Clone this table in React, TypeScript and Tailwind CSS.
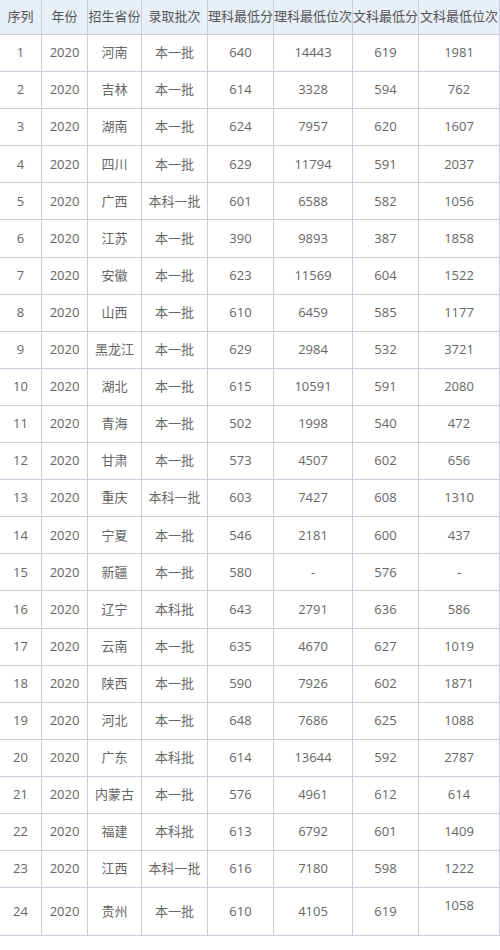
const headers = ['序列', '年份', '招生省份', '录取批次', '理科最低分', '理科最低位次', '文科最低分', '文科最低位次'];

const rows: string[][] = [
  ['1', '2020', '河南', '本一批', '640', '14443', '619', '1981'],
  ['2', '2020', '吉林', '本一批', '614', '3328', '594', '762'],
  ['3', '2020', '湖南', '本一批', '624', '7957', '620', '1607'],
  ['4', '2020', '四川', '本一批', '629', '11794', '591', '2037'],
  ['5', '2020', '广西', '本科一批', '601', '6588', '582', '1056'],
  ['6', '2020', '江苏', '本一批', '390', '9893', '387', '1858'],
  ['7', '2020', '安徽', '本一批', '623', '11569', '604', '1522'],
  ['8', '2020', '山西', '本一批', '610', '6459', '585', '1177'],
  ['9', '2020', '黑龙江', '本一批', '629', '2984', '532', '3721'],
  ['10', '2020', '湖北', '本一批', '615', '10591', '591', '2080'],
  ['11', '2020', '青海', '本一批', '502', '1998', '540', '472'],
  ['12', '2020', '甘肃', '本一批', '573', '4507', '602', '656'],
  ['13', '2020', '重庆', '本科一批', '603', '7427', '608', '1310'],
  ['14', '2020', '宁夏', '本一批', '546', '2181', '600', '437'],
  ['15', '2020', '新疆', '本一批', '580', '-', '576', '-'],
  ['16', '2020', '辽宁', '本科批', '643', '2791', '636', '586'],
  ['17', '2020', '云南', '本一批', '635', '4670', '627', '1019'],
  ['18', '2020', '陕西', '本一批', '590', '7926', '602', '1871'],
  ['19', '2020', '河北', '本一批', '648', '7686', '625', '1088'],
  ['20', '2020', '广东', '本科批', '614', '13644', '592', '2787'],
  ['21', '2020', '内蒙古', '本一批', '576', '4961', '612', '614'],
  ['22', '2020', '福建', '本科批', '613', '6792', '601', '1409'],
  ['23', '2020', '江西', '本科一批', '616', '7180', '598', '1222'],
  ['24', '2020', '贵州', '本一批', '610', '4105', '619', '1058']
];

const colWidths = ['w-[42px]', 'w-[46px]', 'w-[54px]', 'w-[66px]', 'w-[66px]', 'w-[79px]', 'w-[66px]', 'w-[81px]'];

export default function App() {
  return (
    <div
      className="h-[950px] w-[500px] overflow-hidden bg-white text-[13px] text-[#666]"
      style={{ fontFamily: '"Open Sans", "Noto Sans CJK SC", sans-serif' }}>
      <table className="-ml-px -mt-px w-[500px] table-fixed border-collapse">
        <colgroup>
          {colWidths.map((w, idx) => (
            <col key={idx} className={w} />
          ))}
        </colgroup>
        <thead>
          <tr className="h-[35px] bg-[#e7eff8]">
            {headers.map((h) => (
              <th
                key={h}
                className="whitespace-nowrap border border-[#cdcade] p-0 text-center font-normal text-[#555]">
                {h}
              </th>
            ))}
          </tr>
        </thead>
        <tbody>
          {rows.map((row, rIdx) => {
            const last = rIdx === rows.length - 1;
            return (
              <tr key={rIdx} className={last ? 'h-[48px]' : 'h-[37.1px]'}>
                {row.map((cell, cIdx) => (
                  <td
                    key={cIdx}
                    className={
                      'whitespace-nowrap border border-[#cdcade] p-0 text-center ' +
                      (last && cIdx === 7 ? 'pb-3' : '')
                    }>
                    {cell}
                  </td>
                ))}
              </tr>
            );
          })}
        </tbody>
      </table>
    </div>
  );
}
